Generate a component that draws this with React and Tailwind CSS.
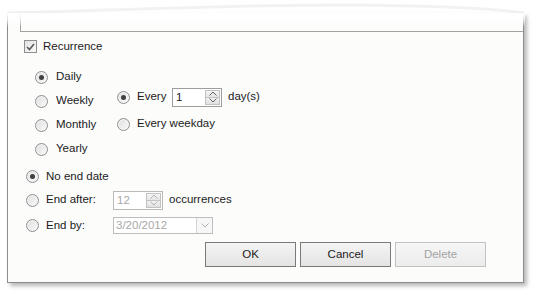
import React from 'react';

const Radio = ({ checked }) => (
  <span className="flex h-[13px] w-[13px] shrink-0 items-center justify-center rounded-full border border-[#8e8f8f] bg-gradient-to-br from-[#dedede] to-[#fbfbfb] shadow-[inset_0_0_0_1px_#f4f4f4]">
    {checked && <span className="h-[5px] w-[5px] rounded-full bg-[#404040]" />}
  </span>
);

const Chevron = ({ up, color = '#5f5f5f' }) => (
  <svg width="8" height="5" viewBox="0 0 8 5" className="block">
    <path
      d={up ? 'M0.5 4.5 L4 1 L7.5 4.5' : 'M0.5 0.5 L4 4 L7.5 0.5'}
      fill="none"
      stroke={color}
      strokeWidth="1"
    />
  </svg>
);

const SpinBox = ({ value, disabled, width }) => (
  <div
    className={`flex h-[19px] ${width} border bg-white ${
      disabled ? 'border-[#b9b9b9] text-[#a8a8a8]' : 'border-[#9d9d9d] text-[#1b1b1b]'
    }`}
  >
    <span className="flex-1 pl-[3px] leading-[17px]">{value}</span>
    <div className="flex w-[17px] flex-col p-[1px]">
      <div className="flex flex-1 items-center justify-center border border-[#c2c2c2] bg-gradient-to-b from-[#f6f6f6] to-[#e4e4e4]">
        <Chevron up color={disabled ? '#b4b4b4' : '#606060'} />
      </div>
      <div className="flex flex-1 items-center justify-center border border-t-0 border-[#c2c2c2] bg-gradient-to-b from-[#f2f2f2] to-[#e0e0e0]">
        <Chevron color={disabled ? '#b4b4b4' : '#606060'} />
      </div>
    </div>
  </div>
);

const FreqRow = ({ label, checked }) => (
  <div className="flex h-[24px] items-center gap-[8px]">
    <Radio checked={checked} />
    <span>{label}</span>
  </div>
);

const App = () => {
  return (
    <div className="relative h-[298px] w-[542px] overflow-hidden bg-white pl-[7px] pt-[13px] font-['Liberation_Sans',Arial,sans-serif] text-[11.5px] text-[#1b1b1b]">
      {/* soft torn-paper shadow above the dialog */}
      <svg className="pointer-events-none absolute left-0 top-0" width="542" height="20" viewBox="0 0 542 20">
        <path
          d="M7 13 C120 10 250 4 360 5 C440 6 500 9 524 13"
          fill="none"
          stroke="rgba(0,0,0,0.05)"
          strokeWidth="3"
        />
      </svg>
      <div className="relative h-[270px] w-[517px] border-x border-b border-[#8d8d8d] bg-[#fcfcfb] shadow-[3px_3px_4px_rgba(0,0,0,0.28)]">
        {/* torn top edge */}
        <div className="pointer-events-none absolute -left-[2px] -right-[2px] top-0 h-[14px] bg-gradient-to-b from-white via-white/70 to-transparent" />

        {/* memo box bottom */}
        <div className="ml-[12px] h-[19px] border-b border-l border-[#a3a3a3]" />

        {/* recurrence checkbox */}
        <div className="ml-[16px] mt-[8px] flex h-[13px] items-center gap-[6px]">
          <span className="flex h-[13px] w-[13px] items-center justify-center border border-[#8e8f8f] bg-gradient-to-br from-[#e2e2e2] to-[#fafafa]">
            <svg width="9" height="8" viewBox="0 0 9 8">
              <path d="M1 4 L3.5 6.5 L8 1" fill="none" stroke="#5a5a5a" strokeWidth="1.6" />
            </svg>
          </span>
          <span>Recurrence</span>
        </div>

        {/* frequency */}
        <div className="ml-[27px] mt-[12px] flex">
          <div className="w-[82px]">
            <FreqRow label="Daily" checked />
            <FreqRow label="Weekly" />
            <FreqRow label="Monthly" />
            <FreqRow label="Yearly" />
          </div>
          <div className="mt-[20px] flex flex-col gap-[3px]">
            <div className="flex h-[24px] items-center">
              <Radio checked />
              <span className="ml-[7px] w-[35px]">Every</span>
              <SpinBox value="1" width="w-[50px]" />
              <span className="ml-[6px]">day(s)</span>
            </div>
            <div className="flex h-[24px] items-center gap-[7px]">
              <Radio />
              <span>Every weekday</span>
            </div>
          </div>
        </div>

        {/* range */}
        <div className="ml-[18px] mt-[4px]">
          <div className="flex h-[23px] items-center gap-[7px]">
            <Radio checked />
            <span>No end date</span>
          </div>
          <div className="flex h-[24px] items-center">
            <Radio />
            <span className="ml-[7px] w-[67px]">End after:</span>
            <SpinBox value="12" disabled width="w-[50px]" />
            <span className="ml-[6px]">occurrences</span>
          </div>
          <div className="flex h-[27px] items-center">
            <Radio />
            <span className="ml-[7px] w-[67px]">End by:</span>
            <div className="flex h-[17px] w-[100px] border border-[#bdbdbd] bg-white text-[#a8a8a8]">
              <span className="flex-1 pl-[2px] leading-[15px]">3/20/2012</span>
              <div className="flex w-[16px] items-center justify-center border-l border-[#d4d4d4] bg-[#f7f7f7]">
                <Chevron color="#b0b0b0" />
              </div>
            </div>
          </div>
        </div>

        {/* buttons */}
        <div className="ml-[197px] mt-[3px] flex gap-[4px]">
          <button className="h-[25px] w-[91px] border border-[#7a7a7a] bg-gradient-to-b from-[#f4f4f4] to-[#e4e4e4] text-[#1b1b1b]">
            OK
          </button>
          <button className="h-[25px] w-[91px] border border-[#7a7a7a] bg-gradient-to-b from-[#f4f4f4] to-[#e4e4e4] text-[#1b1b1b]">
            Cancel
          </button>
          <button className="h-[25px] w-[91px] border border-[#c2c2c2] bg-gradient-to-b from-[#f6f6f6] to-[#ececec] text-[#a3a3a3]">
            Delete
          </button>
        </div>
      </div>
    </div>
  );
};

export default App;
